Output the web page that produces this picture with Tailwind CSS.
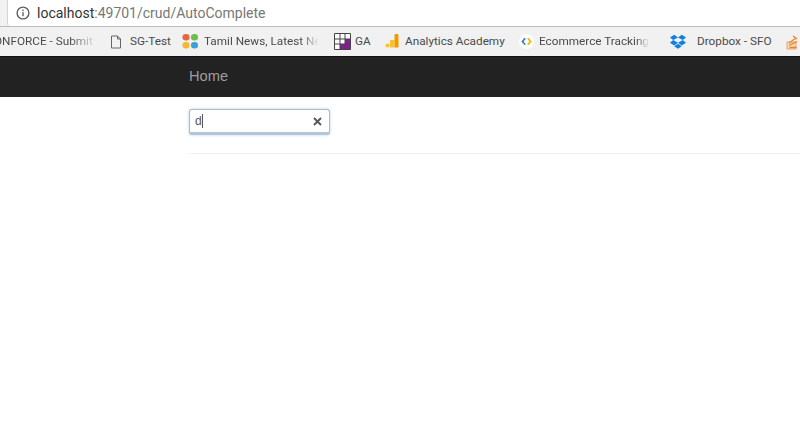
<!DOCTYPE html>
<html>
<head>
<meta charset="utf-8">
<title>AutoComplete</title>
<script src="https://cdn.jsdelivr.net/npm/@tailwindcss/browser@4"></script>
</head>
<body class="bg-white h-[434px] w-[800px] overflow-hidden font-['Roboto',sans-serif]">
  <!-- address bar -->
  <div class="h-[27px] bg-[#f2f2f2] pl-[7px] border-b border-[#bdbdbd]">
    <div class="h-[26px] bg-white rounded-bl-[3px] border-l border-[#d4d4d4] flex items-center pl-[8px] gap-[7px]">
      <svg width="14" height="14" viewBox="0 0 14 14" fill="none" class="shrink-0">
        <circle cx="7" cy="7" r="5.9" stroke="#5f5f5f" stroke-width="1.4"/>
        <rect x="6.3" y="6.2" width="1.4" height="4" fill="#5f5f5f"/>
        <rect x="6.3" y="3.6" width="1.4" height="1.5" fill="#5f5f5f"/>
      </svg>
      <div class="text-[14px] leading-none text-[#777]"><span class="text-[#333]">localhost</span>:49701/crud/AutoComplete</div>
    </div>
  </div>

  <!-- bookmarks -->
  <div class="h-[29px] bg-[#f1f1f1] flex items-center text-[11.75px] text-[#4a4a4a] whitespace-nowrap overflow-hidden">
    <div class="w-[97px] shrink-0 overflow-hidden [mask-image:linear-gradient(to_right,black_72%,transparent)]"><div class="-ml-[6px]">ONFORCE - Submit</div></div>
    <div class="flex items-center gap-[8px] ml-[13px] shrink-0">
      <svg width="12" height="14" viewBox="0 0 12 14" fill="none"><path d="M1.500 1h6l3 3v9h-9z M7.500 1v3h3" stroke="#666" stroke-width="1"/></svg>
      <span class="w-[40px]">SG-Test</span>
    </div>
    <div class="flex items-center gap-[5px] ml-[12px] shrink-0">
      <svg width="17" height="17" viewBox="0 0 17 17">
        <rect x="0.500" y="1" width="7" height="6.500" rx="3.200" fill="#e8663a"/>
        <rect x="9" y="1" width="7" height="6.500" rx="3.200" fill="#6cbf4b"/>
        <rect x="0.500" y="9" width="7" height="6.500" rx="3.200" fill="#f5b82e"/>
        <rect x="9" y="9" width="7" height="6.500" rx="3.200" fill="#3aa0d8"/>
      </svg>
      <span class="w-[115px] [mask-image:linear-gradient(to_right,black_84%,transparent)]">Tamil News, Latest Ne</span>
    </div>
    <div class="flex items-center gap-[4px] ml-[15px] shrink-0">
      <svg width="17" height="17" viewBox="0 0 17 17">
        <rect width="17" height="17" fill="#fff"/>
        <rect x="11" y="6" width="5.500" height="10.500" fill="#8b1a9b"/>
        <rect x="6" y="11" width="5.500" height="5.500" fill="#8b1a9b"/>
        <path d="M.5 .5h16v16H.5z M6 .5v16 M11 .5v16 M.5 6h16 M.5 11h16" stroke="#444" fill="none"/>
      </svg>
      <span class="w-[16px]">GA</span>
    </div>
    <div class="flex items-center gap-[5px] ml-[14px] shrink-0">
      <svg width="15" height="15" viewBox="0 0 15 15">
        <path d="M9.500 1.500a1.500 1.500 0 0 1 4 0v12h-4z" fill="#f29900"/>
        <path d="M5 6h4.500v7.500H5z" fill="#fbc02d"/>
        <circle cx="2.500" cy="11.500" r="2" fill="#fbc02d"/>
      </svg>
      <span class="w-[100px]">Analytics Academy</span>
    </div>
    <div class="flex items-center gap-[5px] ml-[14px] shrink-0">
      <svg width="15" height="15" viewBox="0 0 15 15">
        <circle cx="7.500" cy="7.500" r="7.500" fill="#fff"/>
        <path d="M6.200 4.200 3.500 7.500l1.300 1.600" fill="none" stroke="#3b78e7" stroke-width="1.800"/>
        <path d="M4.800 9.100l1.400 1.700" fill="none" stroke="#34a853" stroke-width="1.800"/>
        <path d="M8.800 4.200l2.700 3.300-2.700 3.300" fill="none" stroke="#f4b400" stroke-width="1.800"/>
      </svg>
      <span class="w-[110px] [mask-image:linear-gradient(to_right,black_88%,transparent)]">Ecommerce Tracking</span>
    </div>
    <div class="flex items-center gap-[11px] ml-[21px] shrink-0">
      <svg width="16" height="15" viewBox="0 0 16 15" fill="#0f7fe0">
        <path d="M4.200 .8 0 3.500l3.200 2.600L8 3.500z M11.800 .8 16 3.500l-3.200 2.600L8 3.500z M3.200 6.100 0 8.700l4.200 2.700L8 8.800z M12.800 6.100 16 8.700l-4.200 2.700L8 8.800z M4.200 12.200 8 14.800l3.800-2.600L8 9.800z"/>
      </svg>
      <span class="w-[74px]">Dropbox - SFO</span>
    </div>
    <svg width="14" height="16" viewBox="0 0 14 16" class="ml-[15px] shrink-0">
      <path d="M1 8h9v7H1z" fill="#f6d9bd" stroke="#e9a468"/>
      <path d="M3 9l7-5M3 11.500l8-4M3.500 13.500h7M7 2l4 3" stroke="#e8832a" stroke-width="1.300" fill="none"/>
    </svg>
  </div>

  <!-- navbar -->
  <nav class="h-[41px] bg-[#222] flex items-center pl-[189px] border-t border-[#111]">
    <a class="text-[14.7px] leading-none text-[#9d9d9d] -mt-[1px] font-['Liberation_Sans',sans-serif]">Home</a>
  </nav>

  <!-- content -->
  <main class="pl-[189px] pt-[12px]">
    <div class="w-[141px] h-[26px] bg-white rounded-[3px] border border-[#a9bccb] border-b-[3px] border-b-[#b4c6d6] shadow-[0_0_3px_rgba(102,150,200,0.45)] flex items-center justify-between pl-[5px] pr-[7px]">
      <div class="flex items-center text-[12px] text-[#555] font-['Liberation_Sans',sans-serif]">d<span class="w-px h-[14px] bg-[#555]"></span></div>
      <svg width="9" height="9" viewBox="0 0 9 9"><path d="M1 1l7 7M8 1L1 8" stroke="#555" stroke-width="1.800"/></svg>
    </div>
    <div class="mt-[18px] h-px bg-[#f0f0f0]"></div>
  </main>
</body>
</html>
